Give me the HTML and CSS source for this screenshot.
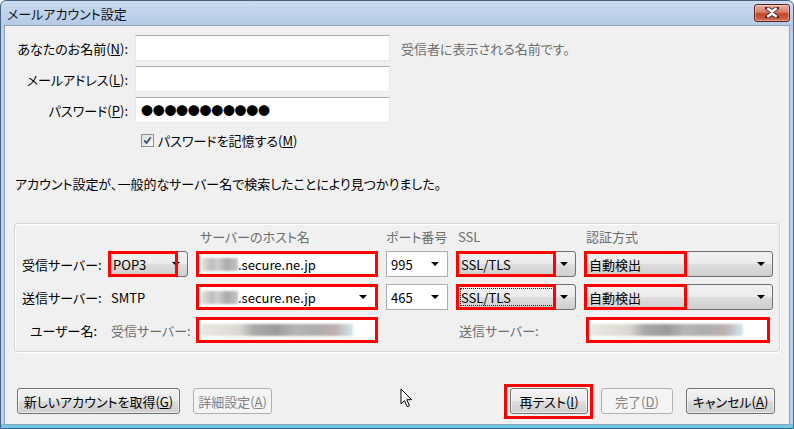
FILE: index.html
```html
<!DOCTYPE html>
<html lang="ja">
<head>
    <meta charset="UTF-8">
    <title>メールアカウント設定</title>
    <link rel="stylesheet" href="styles.css">
</head>
<body>
<div class="window">
    <div class="titlebar">
        <span class="title">メールアカウント設定</span>
        <span class="close">
            <svg width="16" height="11" viewBox="0 0 16 11">
                <path d="M3 1 L8 4.5 L13 1 M3 10 L8 6.5 L13 10" stroke="#5a2a22" stroke-width="4.2" fill="none" stroke-linecap="round"/>
                <path d="M3.3 1.3 L8 4.6 L12.7 1.3 M3.3 9.7 L8 6.4 L12.7 9.7" stroke="#fff" stroke-width="2.4" fill="none"/>
            </svg>
        </span>
    </div>

    <div class="client">
        <div class="identity">
            <label class="label">あなたのお名前(<u>N</u>):</label>
            <div class="textbox"></div>
            <span class="hint">受信者に表示される名前です。</span>

            <label class="label">メールアドレス(<u>L</u>):</label>
            <div class="textbox"></div>
            <span></span>

            <label class="label">パスワード(<u>P</u>):</label>
            <div class="textbox password">●●●●●●●●●●●</div>
            <span></span>
        </div>

        <div class="remember">
            <span class="checkbox">
                <svg width="9" height="9" viewBox="0 0 9 9"><path d="M1.2 4.4 L3.5 7 L7.8 1.2" stroke="#3a5070" stroke-width="1.8" fill="none"/></svg>
            </span>
            <span>パスワードを記憶する(<u>M</u>)</span>
        </div>

        <p class="message">アカウント設定が、一般的なサーバー名で検索したことにより見つかりました。</p>

        <div class="servers">
            <span></span>
            <span></span>
            <span class="head head-host">サーバーのホスト名</span>
            <span class="head">ポート番号</span>
            <span class="head head-pad">SSL</span>
            <span class="head head-pad">認証方式</span>

            <span class="row-label">受信サーバー:</span>
            <div class="combo">POP3<span class="arrow"></span><span class="mark" style="width:70px"></span></div>
            <div class="textbox marked"><span class="blur" style="width:37px"></span>.secure.ne.jp</div>
            <div class="textbox editable">995<span class="arrow"></span></div>
            <div class="combo">SSL/TLS<span class="arrow"></span><span class="mark" style="width:100px"></span></div>
            <div class="combo">自動検出<span class="arrow"></span><span class="mark" style="width:103px"></span></div>

            <span class="row-label">送信サーバー:</span>
            <span class="plain">SMTP</span>
            <div class="textbox editable marked"><span class="blur" style="width:37px"></span>.secure.ne.jp<span class="arrow"></span></div>
            <div class="textbox editable">465<span class="arrow"></span></div>
            <div class="combo">SSL/TLS<span class="arrow"></span><span class="focus"></span><span class="mark" style="width:100px"></span></div>
            <div class="combo">自動検出<span class="arrow"></span><span class="mark" style="width:103px"></span></div>

            <span class="row-label user">ユーザー名:</span>
            <span class="plain muted">受信サーバー:</span>
            <div class="textbox marked"><span class="blur user-blur" style="width:152px"></span></div>
            <span></span>
            <span class="plain muted">送信サーバー:</span>
            <div class="textbox marked narrow"><span class="blur user-blur" style="width:152px"></span></div>
        </div>

        <div class="actions">
            <div class="group">
                <button class="btn new">新しいアカウントを取得(<u>G</u>)</button>
                <button class="btn disabled detail">詳細設定(<u>A</u>)</button>
            </div>
            <div class="group">
                <button class="btn retest">再テスト(<u>I</u>)</button>
                <button class="btn disabled done">完了(<u>D</u>)</button>
                <button class="btn cancel">キャンセル(<u>A</u>)</button>
            </div>
            <svg class="pointer" width="13" height="20" viewBox="0 0 13 20">
                <path d="M1 1 L1 16 L4.5 12.6 L7.2 18.6 L9.4 17.6 L6.8 11.7 L11.6 11.7 Z" fill="#fff" stroke="#000" stroke-width="1" stroke-linejoin="miter"/>
            </svg>
        </div>
    </div>
</div>
</body>
</html>
```

FILE: styles.css
```css
body {
    margin: 0;
    font-family: "Noto Sans CJK JP", "Noto Sans", sans-serif;
    font-size: 13px;
    font-feature-settings: "palt";
    color: #000;
    background: #fff;
}
.window {
    width: 794px;
    height: 429px;
    box-sizing: border-box;
    display: flex;
    flex-direction: column;
    padding: 0 3px 3px 3px;
    border: 1px solid #4a627e;
    border-radius: 6px 6px 0 0;
    background: linear-gradient(#c9dbf0, #b4cae5 25px, #bcd2ea 30px, #bcd2ea 99%, #6fc6e6 99%);
}
.titlebar {
    height: 24px;
    display: flex;
    align-items: center;
    justify-content: space-between;
}
.title {
    padding-left: 3px;
    color: #111;
}
.close {
    width: 34px;
    height: 16px;
    margin-top: -1px;
    display: flex;
    align-items: center;
    justify-content: center;
    border: 1px solid #5a2218;
    border-radius: 3px;
    background: linear-gradient(#e9b0a3, #d77c68 45%, #c4442b 55%, #d36b52);
    box-shadow: inset 0 0 0 1px rgba(255, 255, 255, 0.35);
}
.client {
    flex: 1;
    background: #f0f0f0;
    border: 1px solid #8da3bc;
    padding: 9px 9px 0 9px;
    position: relative;
}
u {
    text-decoration: underline;
    text-underline-offset: 1px;
}

/* identity */
.identity {
    display: grid;
    grid-template-columns: 114px 255px auto;
    grid-auto-rows: 26px;
    column-gap: 7px;
    row-gap: 5px;
    align-items: center;
}
.identity .label {
    text-align: right;
    white-space: nowrap;
}
.hint {
    padding-left: 4px;
    color: #6d6d6d;
}
.textbox {
    height: 26px;
    box-sizing: border-box;
    display: flex;
    align-items: center;
    padding: 0 5px;
    background: #fff;
    border: 1px solid #e3e9ef;
    border-top-color: #abadb3;
    position: relative;
    white-space: nowrap;
}
.password {
    letter-spacing: -0.3px;
    font-size: 12px;
}
.remember {
    margin-top: 8px;
    height: 18px;
    padding-left: 127px;
    display: flex;
    align-items: center;
    gap: 4px;
}
.checkbox {
    width: 11px;
    height: 11px;
    border: 1px solid #8e8f8f;
    background: linear-gradient(135deg, #dcdcdc, #fafafa);
    display: flex;
    align-items: center;
    justify-content: center;
}
.message {
    margin: 27px 0 0 1px;
    line-height: 16px;
}

/* server table */
.servers {
    margin-top: 31px;
    border: 1px solid #d5d5d5;
    border-radius: 4px;
    box-shadow: inset 1px 1px 0 #fff, 1px 1px 0 #fff;
    padding: 5px 6px 8px 7px;
    display: grid;
    grid-template-columns: 78px 80px 182px 62px 120px 189px;
    grid-template-rows: 15px 26px 26px 26px;
    column-gap: 8px;
    row-gap: 7px;
    align-items: center;
}
.head {
    color: #6d6d6d;
    line-height: 15px;
}
.head-host {
    padding-left: 4px;
}
.head-pad {
    padding-left: 2px;
}
.row-label {
    white-space: nowrap;
}
.row-label.user {
    text-align: right;
    padding-right: 3px;
}
.plain {
    padding-left: 3px;
    white-space: nowrap;
}
.muted {
    color: #6d6d6d;
}
.combo {
    height: 26px;
    box-sizing: border-box;
    display: flex;
    align-items: center;
    padding: 0 4px;
    border: 1px solid #707070;
    border-radius: 3px;
    background: linear-gradient(#f2f2f2, #ebebeb 50%, #dddddd 51%, #cfcfcf);
    position: relative;
}
.arrow {
    margin-left: auto;
    margin-right: 3px;
    width: 0;
    height: 0;
    border-left: 4px solid transparent;
    border-right: 4px solid transparent;
    border-top: 4px solid #000;
}
.editable {
    padding-left: 4px;
    border-color: #abadb3;
}
.marked {
    border: 3px solid #f00;
    padding-left: 2px;
}
.narrow {
    margin: 0 3px 0 2px;
}
.mark {
    position: absolute;
    left: -1px;
    top: -1px;
    bottom: -1px;
    box-sizing: border-box;
    border: 3px solid #f00;
}
.focus {
    position: absolute;
    left: 3px;
    top: 3px;
    bottom: 3px;
    width: 94px;
    border: 1px dotted #222;
}
.blur {
    display: inline-block;
    height: 13px;
    background: linear-gradient(90deg, #e4e4e4, #bdbdbd 30%, #d0d0d0 45%, #ababab 70%, #c6c6c6);
    filter: blur(1.2px);
}
.user-blur {
    height: 12px;
    background: linear-gradient(90deg, #ebe8e4, #dcd8d4 25%, #a9a9a9 35%, #9b9b9b 50%, #b6b6b6 62%, #aeaeae 75%, #bfb0b0 88%, #cfe8ee);
}

/* buttons */
.actions {
    margin-top: 36px;
    padding: 0 5px 0 3px;
    display: flex;
    justify-content: space-between;
    position: relative;
}
.group {
    display: flex;
    gap: 13px;
}
.btn {
    height: 26px;
    padding: 0;
    font: inherit;
    font-feature-settings: "palt";
    color: #000;
    white-space: nowrap;
    border: 1px solid #707070;
    border-radius: 3px;
    background: linear-gradient(#f2f2f2, #ebebeb 50%, #dddddd 51%, #cfcfcf);
    box-shadow: inset 0 0 0 1px rgba(255, 255, 255, 0.6);
}
.btn.disabled {
    color: #838383;
    border-color: #adb2b5;
    background: #f4f4f4;
    box-shadow: none;
}
.new {
    width: 163px;
}
.detail {
    width: 79px;
}
.retest {
    width: 78px;
    position: relative;
}
.retest::after {
    content: "";
    position: absolute;
    left: -7px;
    right: -6px;
    top: -5px;
    bottom: -6px;
    border: 3px solid #f00;
}
.done {
    width: 72px;
}
.cancel {
    width: 89px;
}
.pointer {
    position: absolute;
    left: 386px;
    top: 0;
}
```
